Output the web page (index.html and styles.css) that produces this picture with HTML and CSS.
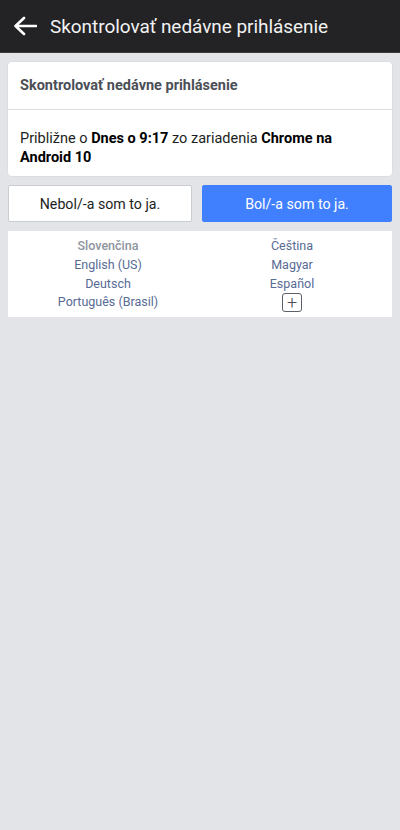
FILE: index.html
```html
<!DOCTYPE html>
<html lang="sk">
<head>
<meta charset="utf-8">
<link rel="stylesheet" href="styles.css">
</head>
<body>
<header class="topbar">
  <svg class="back" width="24" height="20" viewBox="0 0 24 20"><path d="M23 10H3M11 2L2.5 10L11 18" fill="none" stroke="#fff" stroke-width="2.6" stroke-linecap="round" stroke-linejoin="round"/></svg>
  <h1 class="title">Skontrolovať nedávne prihlásenie</h1>
</header>
<main class="content">
  <section class="card">
    <div class="card-head">Skontrolovať nedávne prihlásenie</div>
    <div class="card-body">Približne o <b>Dnes o 9:17</b> zo zariadenia <b>Chrome na Android 10</b></div>
  </section>
  <div class="actions">
    <button class="btn btn-secondary">Nebol/-a som to ja.</button>
    <button class="btn btn-primary">Bol/-a som to ja.</button>
  </div>
  <section class="langs">
    <div class="col">
      <span class="lang current">Slovenčina</span>
      <span class="lang">English (US)</span>
      <span class="lang">Deutsch</span>
      <span class="lang">Português (Brasil)</span>
    </div>
    <div class="col">
      <span class="lang">Čeština</span>
      <span class="lang">Magyar</span>
      <span class="lang">Español</span>
      <span class="more">+</span>
    </div>
  </section>
</main>
</body>
</html>
```
FILE: styles.css
```css
* { box-sizing: border-box; }
html, body { margin: 0; padding: 0; }
body {
  background: #e3e4e8;
  font-family: Roboto, "Noto Sans", sans-serif;
  width: 400px;
  min-height: 830px;
}
.topbar {
  height: 53px;
  background: #232325;
  border-bottom: 1px solid #3a3a3c;
  display: flex;
  align-items: center;
  padding-left: 13px;
}
.back { margin-right: 13px; }
.title {
  margin: 0;
  color: #f2f2f2;
  font-size: 19px;
  font-weight: 400;
  letter-spacing: -0.05px;
}
.content { padding: 9px 8px 0 8px; }
.card {
  background: #fff;
  border-radius: 4px;
  box-shadow: 0 0 0 1px #dadde1;
}
.card-head {
  height: 48px;
  padding: 15px 12px 0 12px;
  font-size: 14.5px;
  font-weight: 700;
  color: #4b4f56;
  border-bottom: 1px solid #dadde1;
}
.card-body {
  padding: 19px 12px 9px 12px;
  font-size: 14.5px;
  line-height: 19px;
  color: #1c1e21;
}
.card-body b { font-weight: 700; color: #000; }
.actions {
  display: flex;
  gap: 10px;
  margin-top: 9px;
}
.btn {
  height: 37px;
  font-family: inherit;
  font-size: 14.2px;
  border-radius: 2px;
  padding: 0;
}
.btn-secondary {
  width: 184px;
  background: #fff;
  border: 1px solid #c9ccd1;
  color: #1c1e21;
}
.btn-primary {
  flex: 1;
  background: #4080ff;
  border: 1px solid #4080ff;
  color: #fff;
}
.langs {
  margin-top: 9px;
  background: #fff;
  display: grid;
  grid-template-columns: 1fr 1fr;
  padding: 6px 8px 5px 8px;
}
.col {
  display: flex;
  flex-direction: column;
  align-items: center;
}
.lang {
  font-size: 12.5px;
  line-height: 18.8px;
  color: #576b95;
}
.lang.current { color: #8d949e; font-weight: 500; }
.more {
  width: 20px;
  height: 19px;
  border: 1px solid #5b6068;
  border-radius: 3px;
  display: flex;
  align-items: center;
  justify-content: center;
  color: #4b4f56;
  font-size: 18px;
  font-weight: 300;
  line-height: 1;
}
```
